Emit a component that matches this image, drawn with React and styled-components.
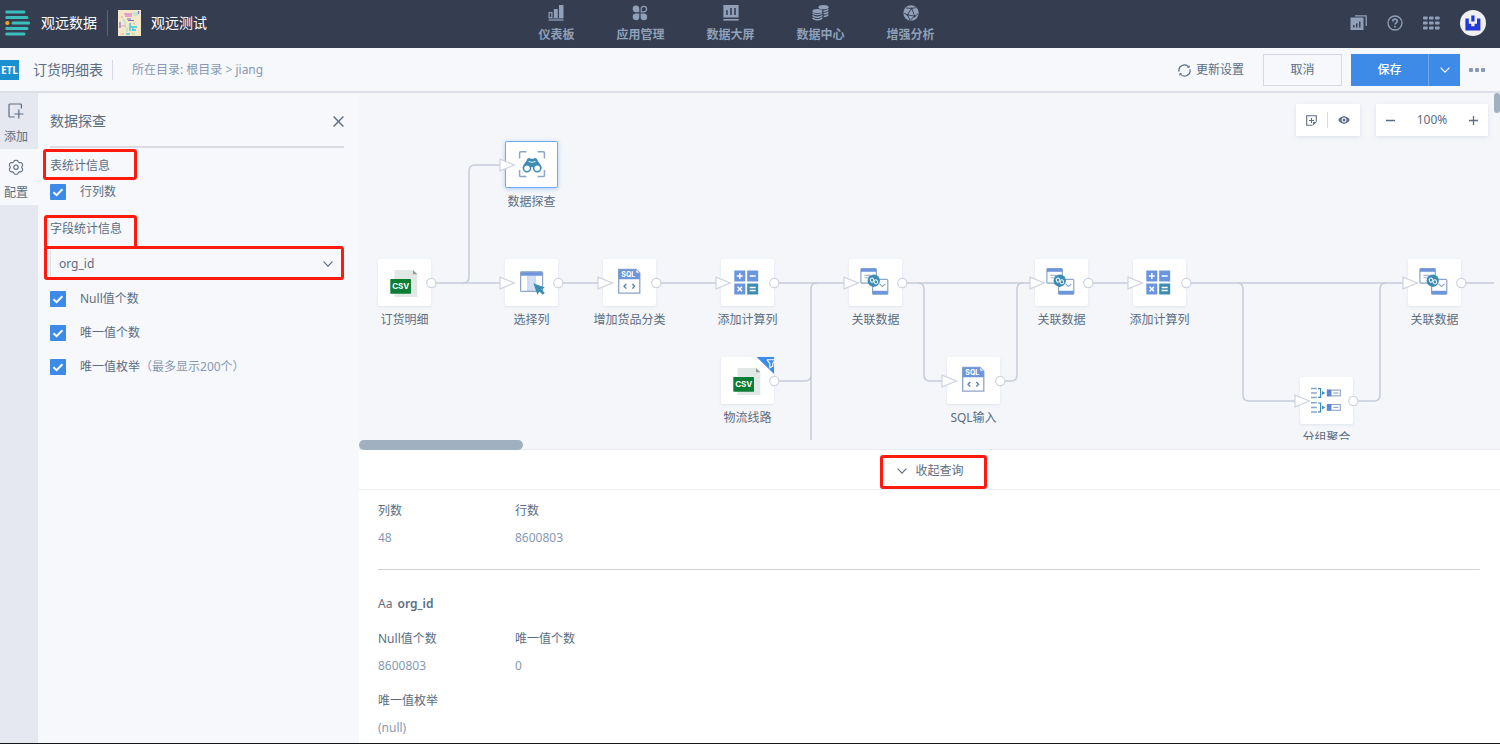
import React from "react"
import styled, { createGlobalStyle, css } from "styled-components"

const theme = {
  colors: {
    header: "#353d50",
    nav: "#8fa0b8",
    page: "#f6f8fb",
    canvas: "#f4f6fa",
    rail: "#e5e8f0",
    text: "#5c6d82",
    muted: "#8799b3",
    line: "#dcdfe6",
    wire: "#c5ccda",
    blue: "#3d8be6",
    iconBlue: "#6b96dd",
    iconTeal: "#3d8cb3",
    iconLine: "#8da4c8",
    scroll: "#a0b0c0",
    mark: "#ff1a0d",
  },
  fontSizes: [12, 14],
}

const GlobalStyle = createGlobalStyle`
  * {
    box-sizing: border-box;
  }

  body {
    margin: 0;
    color: ${theme.colors.text};
    font-family: "Noto Sans", "Noto Sans CJK SC", sans-serif;
    font-size: ${theme.fontSizes[0]}px;
    line-height: 20px;
  }

  button, select, input {
    margin: 0;
    padding: 0;
    border: 0;
    background: none;
    color: inherit;
    font: inherit;
  }

  a {
    color: inherit;
    text-decoration: none;
  }

  svg {
    display: block;
    flex: none;
  }
`

/* header icons */

const LogoIcon = () => (
  <svg width="26" height="28" viewBox="0 0 26 28" aria-hidden="true">
    <g stroke="#3bbdbb" strokeWidth="3" strokeLinecap="round">
      <path d="M1.7 3H19M1.7 8.4H22M8 14H23.7M1.7 19.6H22M1.7 25H19" />
    </g>
    <circle cx="2.3" cy="14" r="2.1" fill="#f7a81b" />
  </svg>
)

const TenantIcon = () => (
  <svg width="23" height="26" viewBox="0 0 23 26" aria-hidden="true">
    <path d="M0 0h23v26H0z" fill="#f4e8c8" />
    <g fill="none" strokeWidth="1">
      <path d="M14 3h6M15 5h5M5 9q3 3 2 7 3 2 2 6" stroke="#9bdcd6" />
      <path d="M6 4h8M7 6h7" strokeWidth="1.6" stroke="#d98fc8" />
      <path d="M9 9h4M10 10.5h6M2 12v6M20.5 1v3" strokeWidth="1.2" stroke="#7a6fd0" />
      <path d="M12 13v8M12 17h7M14 20h4M8 24h4M15 18v3" strokeWidth="1.4" stroke="#3cc4e0" />
      <path d="M3 7h2M3 16h4M4 24h2" stroke="#eba0a8" />
      <path d="M14 24h3M15 13l2 1" stroke="#b6d58c" />
    </g>
  </svg>
)

const DashboardIcon = () => (
  <svg width="16" height="16" viewBox="0 0 16 16" fill="currentColor" aria-hidden="true">
    <path d="M.5 13.4h15V16H.5z" opacity=".65" />
    <path d="M11 0h4.5v13H11zM5.8 4h4v9h-4z" />
    <path d="M1.1 7.6h2.8v4.9H1.1z" fill="none" stroke="currentColor" strokeWidth="1.2" />
  </svg>
)

const AppsIcon = () => (
  <svg width="16" height="16" viewBox="0 0 16 16" fill="currentColor" aria-hidden="true">
    <path d="M7.3 7.2H4A3.3 3.3 0 1 1 7.3 4zM7.3 8.6H4A3.3 3.3 0 1 0 7.3 12zM8.6 8.6H12A3.3 3.3 0 1 1 8.6 12z" />
    <path d="M9.2 6.8V4A2.7 2.7 0 1 1 12 6.8z" fill="none" stroke="currentColor" strokeWidth="1.2" />
  </svg>
)

const ScreenIcon = () => (
  <svg width="16" height="16" viewBox="0 0 16 16" fill="currentColor" aria-hidden="true">
    <path
      fillRule="evenodd"
      d="M.4 0h15.2v12.4H.4zM3.2 5v5h1.5V5zM7.2 3v7h1.6V3zM11.2 3v7h1.6V3z"
    />
    <path d="M.4 14h15.2v1.6H.4z" />
  </svg>
)

const DataIcon = () => (
  <svg width="17" height="16" viewBox="0 0 17 16" fill="currentColor" aria-hidden="true">
    <ellipse cx="11.5" cy="2.2" rx="5" ry="2.1" />
    <ellipse cx="5.4" cy="6" rx="5" ry="2.1" />
    <g fill="none" stroke="currentColor" strokeWidth="1.5">
      <path d="M.7 7.6c.8 2.6 8.6 2.6 9.4 0M.7 10.2c.8 2.6 8.6 2.6 9.4 0M.7 12.8c.8 2.6 8.6 2.6 9.4 0" />
      <path d="M11.4 6.2c2.2 0 4.2-.6 4.8-1.9M11.6 8.8c2 0 4-.6 4.6-1.9M11.6 11.4c2 0 4-.6 4.6-1.9" />
    </g>
  </svg>
)

const BoostIcon = () => (
  <svg width="16" height="16" viewBox="0 0 16 16" aria-hidden="true">
    <circle cx="8" cy="8" r="7.7" fill="currentColor" />
    <g fill="none" stroke={theme.colors.header} strokeWidth=".9">
      <path d="M8.6 3.4 4.4 9.8l7.4 1.4zM8.6 3.4 13 2.6M4.4 9.8.6 8M4.4 9.8l2.6 5.6M11.8 11.2l3.4-2.4M11.8 11.2 7 15.4M8.6 3.4 3.2 3" />
    </g>
    <g fill={theme.colors.header}>
      <circle cx="8.6" cy="3.4" r="1" />
      <circle cx="4.4" cy="9.8" r="1" />
      <circle cx="11.8" cy="11.2" r="1" />
    </g>
  </svg>
)

const ReportsIcon = () => (
  <svg width="17" height="16" viewBox="0 0 17 16" fill="currentColor" aria-hidden="true">
    <path
      fillRule="evenodd"
      d="M.5 2.6h13V15H.5zM3 10v2.4h1.5V10zM6 8.6v3.8h1.5V8.6zM9 6.6v5.8h1.5V6.6z"
    />
    <path d="M5 .8h11.2V11" fill="none" stroke="currentColor" strokeWidth="1.3" />
  </svg>
)

const HelpIcon = () => (
  <svg width="16" height="16" viewBox="0 0 16 16" fill="none" stroke="currentColor" aria-hidden="true">
    <circle cx="8" cy="8" r="7" strokeWidth="1.3" />
    <path d="M5.8 6.4C5.8 3.4 10.3 3.5 10.3 6.2 10.3 7.8 8 7.8 8 9.6" strokeWidth="1.6" />
    <path d="M8 10.8v1.6" strokeWidth="1.6" />
  </svg>
)

const GridIcon = () => (
  <svg width="17" height="14" viewBox="0 0 17 14" fill="currentColor" aria-hidden="true">
    {[0, 5, 10].map(y =>
      [0, 6, 12].map(x => (
        <rect key={`${x}-${y}`} x={x} y={y + 0.5} width="4.6" height="3" rx=".8" />
      ))
    )}
  </svg>
)

const AvatarIcon = () => (
  <svg width="26" height="26" viewBox="0 0 26 26" aria-hidden="true">
    <circle cx="13" cy="13" r="13" fill="#f0f0f2" />
    <path
      d="M5.4 8.6h3.4v5.2h2.4v2.4h3.4v-2.4H17V8.6h3.4v12H5.4zM11.3 5.6h3.2v6h-3.2z"
      fill="#2238d8"
    />
  </svg>
)

/* line icons */

const RefreshIcon = () => (
  <svg width="13" height="13" viewBox="0 0 13 13" fill="none" stroke="currentColor" strokeWidth="1.2" aria-hidden="true">
    <path d="M1.1 7.6A5.4 5.4 0 0 1 10.6 3M11.9 5.4A5.4 5.4 0 0 1 2.4 10" />
    <path d="M11.2 1.6v1.8H9.4M1.8 11.4V9.6h1.8" strokeWidth="1" />
  </svg>
)

const ChevronIcon = () => (
  <svg width="10" height="6" viewBox="0 0 10 6" fill="none" stroke="currentColor" strokeWidth="1.1" aria-hidden="true">
    <path d="M.6.6 5 5.2 9.4.6" />
  </svg>
)

const CloseIcon = () => (
  <svg width="11" height="11" viewBox="0 0 11 11" fill="none" stroke="currentColor" strokeWidth="1.4" aria-hidden="true">
    <path d="M.6.6l9.8 9.8M10.4.6.6 10.4" />
  </svg>
)

const AddIcon = () => (
  <svg width="16" height="16" viewBox="0 0 16 16" fill="none" stroke="currentColor" strokeWidth="1.2" aria-hidden="true">
    <path d="M13.4 5.4V2q0-1-1-1H2Q1 1 1 2v11q0 1 1 1h4.6M10.8 6.6v8.8M6.4 11H15.4" />
  </svg>
)

const GearIcon = () => (
  <svg width="16" height="16" viewBox="0 0 16 16" fill="none" stroke="currentColor" strokeWidth="1.1" aria-hidden="true">
    <path
      d="M6.4 1.6q1.6-.8 3.2 0l.8 1.5 1 .6 1.8-.1q1.3 1 1.5 2.6l-.9 1.6v.9l.9 1.6q-.2 1.6-1.5 2.6l-1.8-.1-1 .6-.8 1.5q-1.6.8-3.2 0l-.8-1.5-1-.6-1.8.1q-1.3-1-1.5-2.6l.9-1.6v-.9l-.9-1.6q.2-1.6 1.5-2.6l1.8.1 1-.6z"
      strokeLinejoin="round"
    />
    <circle cx="8" cy="8.2" r="2.2" />
  </svg>
)

const NoteIcon = () => (
  <svg width="11" height="11" viewBox="0 0 11 11" fill="none" stroke="currentColor" strokeWidth="1.1" aria-hidden="true">
    <path d="M10.3 6.8V.7H.7v9.6h6M5.5 3v5M3 5.5h5" />
    <path d="M7 10.6 10.6 7H7z" fill="currentColor" stroke="none" />
  </svg>
)

const EyeIcon = () => (
  <svg width="12" height="8" viewBox="0 0 12 8" aria-hidden="true">
    <path d="M.3 4C3-1 9-1 11.7 4 9 9 3 9 .3 4z" fill="currentColor" />
    <circle cx="6" cy="4" r="2.5" fill="#fff" />
    <circle cx="6" cy="4" r="1.5" fill="currentColor" />
  </svg>
)

const MinusIcon = () => (
  <svg width="9" height="9" viewBox="0 0 9 9" fill="none" stroke="currentColor" strokeWidth="1.5" aria-hidden="true">
    <path d="M0 4.5h9" />
  </svg>
)

const PlusIcon = () => (
  <svg width="9" height="9" viewBox="0 0 9 9" fill="none" stroke="currentColor" strokeWidth="1.3" aria-hidden="true">
    <path d="M0 4.5h9M4.5 0v9" />
  </svg>
)

const TickIcon = () => (
  <svg width="16" height="16" viewBox="0 0 16 16" fill="none" stroke="#fff" strokeWidth="2" aria-hidden="true">
    <path d="M3.4 8.2 6.6 11.2 12.4 5.2" />
  </svg>
)

/* node icons, all drawn on the 53x47 card */

const { iconBlue, iconTeal, iconLine } = theme.colors

const CsvIcon = () => (
  <g>
    <path d="M16.5 11H35l4.3 4.3V38H16.5z" fill="#e1e8e5" />
    <path d="M35 11l4.3 4.3H35z" fill="#909c9c" />
    <rect x="12.3" y="20" width="20.7" height="14.7" rx=".6" fill="#0b7d35" />
    <IconText x="22.7" y="30.4" size={8}>CSV</IconText>
  </g>
)

const SqlIcon = () => (
  <g>
    <path d="M15.7 10.4H33L36.8 14V34.2H15.7z" fill="#fff" stroke={iconLine} strokeWidth="1.3" />
    <path d="M15.7 10.4H33L36.8 14V20.3H15.7z" fill={iconBlue} />
    <path d="M33 10.4v3.6h3.8z" fill="#fff" stroke={iconLine} strokeWidth=".8" />
    <IconText x="25.3" y="18" size={7}>SQL</IconText>
    <path d="M23.3 25 21 27.3l2.3 2.3M29.3 25l2.3 2.3-2.3 2.3" fill="none" stroke="#5579ad" strokeWidth="1.3" />
  </g>
)

const SelectIcon = () => (
  <g>
    <rect x="15.6" y="12.8" width="22" height="19.6" rx="1" fill="#fff" />
    <path d="M22.8 16.5h7.4v16h-7.4z" fill="#d3e0f6" />
    <path d="M15.6 12.8h22v4h-22z" fill={iconBlue} />
    <path d="M22.8 17v15.4M30.2 17v15.4" stroke="#c3d0e6" strokeWidth="1" />
    <rect x="15.6" y="12.8" width="22" height="19.6" rx="1" fill="none" stroke={iconLine} strokeWidth="1.2" />
    <path d="M28.4 24.2 39.8 28.4 36.4 30.4 39.8 33.8 37.8 35.8 34.4 32.4 32.4 35.8z" fill={iconTeal} />
  </g>
)

const CalcIcon = () => (
  <g>
    <path d="M13.3 11.6h11v11h-11zM26.2 11.6h11v11h-11zM13.3 24.5h11v11h-11z" fill={iconBlue} />
    <path d="M26.2 24.5h11v11h-11z" fill={iconTeal} />
    <path
      d="M15.8 17.1h6M18.8 14.1v6M28.7 17.1h6M16.6 27.8l4.4 4.4M21 27.8l-4.4 4.4M28.7 28.4h6M28.7 31.6h6"
      stroke="#fff"
      strokeWidth="1.5"
    />
  </g>
)

const JoinIcon = () => (
  <g>
    <rect x="11.9" y="9.6" width="15.4" height="14.6" rx="1" fill="#fff" stroke={iconLine} strokeWidth="1.2" />
    <path d="M12 9.6h15.2v3.2H12z" fill={iconBlue} />
    <path d="M15.4 16.4h6M15.4 18.8h4" stroke="#a7b7cf" strokeWidth="1.1" />
    <rect x="23.6" y="20.4" width="15.2" height="14.8" rx="1" fill="#fff" stroke={iconLine} strokeWidth="1.2" />
    <path d="M23.7 31.8h15v3.4h-15z" fill={iconBlue} />
    <path d="M30.6 24.8l2.8 2.6 3-2.6" fill="none" stroke={iconLine} strokeWidth="1.1" />
    <circle cx="24.7" cy="21.7" r="6.2" fill={iconTeal} />
    <g fill="none" stroke="#fff" strokeWidth="1">
      <rect x="-2.6" y="-1.5" width="3.4" height="4" rx="1.7" transform="translate(23.6 20.2) rotate(-30)" />
      <rect x="-1" y="-1.5" width="3.4" height="4" rx="1.7" transform="translate(26 22.8) rotate(-30)" />
    </g>
  </g>
)

const GroupIcon = () => (
  <g>
    {[0, 14.4].map(y => (
      <g key={y} transform={`translate(0 ${y})`}>
        <path d="M11 11.4h5.8M11 16h5.8M11 20.6h5.8" stroke={iconLine} strokeWidth="1.5" />
        <path d="M18 11.6h2.6v8.8H18" fill="none" stroke={iconTeal} strokeWidth="1.2" />
        <path d="M22 14l3.2 2-3.2 2z" fill={iconTeal} />
        <rect x="27.3" y="13.1" width="13" height="5.8" fill="#fff" stroke={iconLine} strokeWidth="1.1" />
        <path d="M27 12.7h4.4v6.6H27z" fill="#5b86d6" />
        <path d="M33.4 16h5" stroke={iconLine} strokeWidth="1.1" />
      </g>
    ))}
  </g>
)

const ExploreIcon = () => (
  <g>
    <path
      d="M14.6 17.6V12q0-1.2 1.2-1.2h5.6M32.6 10.8h5.6q1.2 0 1.2 1.2v5.6M39.4 29v5.4q0 1.2-1.2 1.2h-5.6M21.4 35.6h-5.6q-1.2 0-1.2-1.2V29"
      fill="none"
      stroke={iconLine}
      strokeWidth="1.5"
    />
    <path
      d="M22.4 17.8q2-1.6 3.4 0h2.6q1.4-1.6 3.4 0l1 2.2 2.6 3.6q1.4 2 1 4.2h-8.2v-1.6h-2.2v1.6h-8.2q-.4-2.2 1-4.2l2.6-3.6z"
      fill={iconTeal}
    />
    <path d="M23.6 20.4q3.5 2 7 0" fill="none" stroke="#fff" strokeWidth=".9" />
    <circle cx="22" cy="27.2" r="3.5" fill="#fff" stroke={iconTeal} strokeWidth="1.5" />
    <circle cx="32.2" cy="27.2" r="3.5" fill="#fff" stroke={iconTeal} strokeWidth="1.5" />
  </g>
)

const FilterFlag = () => (
  <g>
    <path d="M35.6 0H53v17z" fill={theme.colors.blue} />
    <path d="M45.8 2.8H53M46 2.8l2.8 3.6v4.4l3-1.6V6.4L53 4.6" fill="none" stroke="#fff" strokeWidth="1.1" />
  </g>
)

const menu = [
  { title: "仪表板", Icon: DashboardIcon },
  { title: "应用管理", Icon: AppsIcon },
  { title: "数据大屏", Icon: ScreenIcon },
  { title: "数据中心", Icon: DataIcon },
  { title: "增强分析", Icon: BoostIcon },
]

const nodes = [
  { id: "orders", title: "订货明细", x: 19, y: 166, Icon: CsvIcon, source: true },
  { id: "explore", title: "数据探查", x: 146, y: 48, Icon: ExploreIcon, selected: true },
  { id: "columns", title: "选择列", x: 146, y: 166, Icon: SelectIcon },
  { id: "category", title: "增加货品分类", x: 244, y: 166, Icon: SqlIcon },
  { id: "calc", title: "添加计算列", x: 362, y: 166, Icon: CalcIcon },
  { id: "routes", title: "物流线路", x: 362, y: 264, Icon: CsvIcon, source: true, filtered: true },
  { id: "join", title: "关联数据", x: 490, y: 166, Icon: JoinIcon },
  { id: "sql", title: "SQL输入", x: 588, y: 264, Icon: SqlIcon },
  { id: "join2", title: "关联数据", x: 676, y: 166, Icon: JoinIcon },
  { id: "calc2", title: "添加计算列", x: 774, y: 166, Icon: CalcIcon },
  { id: "group", title: "分组聚合", x: 941, y: 284, Icon: GroupIcon },
  { id: "join3", title: "关联数据", x: 1049, y: 166, Icon: JoinIcon },
]

const wires = [
  "M72 190H146M199 190H244M297 190H362M415 190H490M543 190H676M729 190H774M827 190H1049M1102 190H1135",
  "M104 190q6 0 6-6V78q0-6 6-6H146",
  "M452 347V196q0-6 6-6M415 288H446q6 0 6-6",
  "M559 190q6 0 6 6V282q0 6 6 6H588",
  "M641 288H652q6 0 6-6V196q0-6 6-6",
  "M878 190q6 0 6 6V302q0 6 6 6H941",
  "M994 308H1015q6 0 6-6V196q0-6 6-6",
]

const fieldChecks = [
  { id: "nulls", title: "Null值个数" },
  { id: "distinct", title: "唯一值个数" },
  { id: "values", title: "唯一值枚举", hint: "（最多显示200个）" },
]

const IconText = ({ x, y, size, children }) => (
  <text
    x={x}
    y={y}
    fontSize={size}
    fontFamily="Inter, sans-serif"
    fontWeight="700"
    textAnchor="middle"
    fill="#fff"
  >
    {children}
  </text>
)

const CheckRow = ({ id, title, hint, compact }) => (
  <CheckLabel htmlFor={id} $compact={compact}>
    <CheckSlot>
      <Checkbox id={id} type="checkbox" defaultChecked />
      <TickIcon />
    </CheckSlot>
    <span>
      {title}
      {hint && <Hint>{hint}</Hint>}
    </span>
  </CheckLabel>
)

const FlowNode = ({ title, x, y, Icon, source, selected, filtered }) => (
  <NodeBox style={{ left: x, top: y }}>
    <NodeCard type="button" aria-label={title} $selected={selected}>
      <NodeDrawing viewBox="0 0 53 47" aria-hidden="true">
        <Icon />
        {filtered && <FilterFlag />}
        <g fill="#fff" stroke="#cdd3df" strokeWidth="1.2">
          {!source && <path d="M-5 18.2V29.8L9.4 24z" />}
          {!selected && <circle cx="53.3" cy="24" r="4.6" />}
        </g>
      </NodeDrawing>
    </NodeCard>
    <NodeTitle>{title}</NodeTitle>
  </NodeBox>
)

const Stat = ({ title, value }) => (
  <StatItem>
    <dt>{title}</dt>
    <StatValue>{value}</StatValue>
  </StatItem>
)

const App = () => (
  <Page>
    <GlobalStyle />
    <Header>
      <Brand>
        <LogoIcon />
        <BrandName>观远数据</BrandName>
        <BrandDivider />
        <TenantIcon />
        <BrandName>观远测试</BrandName>
      </Brand>
      <Menu>
        {menu.map(({ title, Icon }) => (
          <MenuLink key={title} href="#">
            <Icon />
            {title}
          </MenuLink>
        ))}
      </Menu>
      <Tools>
        <IconButton type="button" aria-label="报表"><ReportsIcon /></IconButton>
        <IconButton type="button" aria-label="帮助"><HelpIcon /></IconButton>
        <IconButton type="button" aria-label="应用"><GridIcon /></IconButton>
        <IconButton type="button" aria-label="账户"><AvatarIcon /></IconButton>
      </Tools>
    </Header>

    <TitleBar>
      <EtlBadge>ETL</EtlBadge>
      <Title>订货明细表</Title>
      <Path>所在目录: 根目录 &gt; jiang</Path>
      <RefreshButton type="button">
        <RefreshIcon />
        更新设置
      </RefreshButton>
      <CancelButton type="button">取消</CancelButton>
      <SaveGroup>
        <SaveButton type="button">保存</SaveButton>
        <SaveMenuButton type="button" aria-label="更多保存选项"><ChevronIcon /></SaveMenuButton>
      </SaveGroup>
      <MoreButton type="button" aria-label="更多">
        <i /><i /><i />
      </MoreButton>
    </TitleBar>

    <Body>
      <Rail>
        <RailButton type="button">
          <AddIcon />
          添加
        </RailButton>
        <RailButton type="button" $active>
          <GearIcon />
          配置
        </RailButton>
      </Rail>

      <Settings>
        <SettingsHeader>
          <SettingsTitle>数据探查</SettingsTitle>
          <IconButton type="button" aria-label="关闭"><CloseIcon /></IconButton>
        </SettingsHeader>
        <SectionTitle>
          表统计信息
          <Mark $inset="-7px auto -4px -7px" $width={94} />
        </SectionTitle>
        <CheckRow id="shape" title="行列数" compact />
        <FieldTitle>
          <label htmlFor="field">字段统计信息</label>
          <Mark $inset="-4px auto -10px -6px" $width={93} />
        </FieldTitle>
        <SelectBox>
          <Select id="field" defaultValue="org_id">
            <option>org_id</option>
          </Select>
          <ChevronIcon />
          <Mark $inset="-3px 0 -1px -7px" />
        </SelectBox>
        {fieldChecks.map(check => (
          <CheckRow key={check.id} {...check} />
        ))}
      </Settings>

      <Main>
        <CanvasArea>
          <Canvas>
            <Wires viewBox="0 0 1135 347" aria-hidden="true">
              {wires.map(d => (
                <path key={d} d={d} />
              ))}
            </Wires>
            {nodes.map(node => (
              <FlowNode key={node.id} {...node} />
            ))}
          </Canvas>
          <CanvasTools>
            <ToolBox>
              <IconButton type="button" aria-label="添加备注"><NoteIcon /></IconButton>
              <ToolDivider />
              <IconButton type="button" aria-label="预览"><EyeIcon /></IconButton>
            </ToolBox>
            <ZoomBox>
              <IconButton type="button" aria-label="缩小"><MinusIcon /></IconButton>
              100%
              <IconButton type="button" aria-label="放大"><PlusIcon /></IconButton>
            </ZoomBox>
          </CanvasTools>
          <ScrollX />
          <ScrollY />
        </CanvasArea>

        <ResultHeader>
          <CollapseButton type="button">
            <ChevronIcon />
            收起查询
            <Mark $inset="-6px -23px -8px -17px" />
          </CollapseButton>
        </ResultHeader>
        <Result>
          <TableStats>
            <Stat title="列数" value="48" />
            <Stat title="行数" value="8600803" />
          </TableStats>
          <FieldName>
            <span>Aa</span> org_id
          </FieldName>
          <Stats>
            <Stat title="Null值个数" value="8600803" />
            <Stat title="唯一值个数" value="0" />
          </Stats>
          <Stats>
            <Stat title="唯一值枚举" value="(null)" />
          </Stats>
        </Result>
      </Main>
    </Body>
  </Page>
)

export default App

const Page = styled.div`
  display: flex;
  flex-direction: column;
  min-height: 100vh;
  border-bottom: 1px solid #15161a;
  background-color: ${theme.colors.page};
`

const Header = styled.header`
  display: flex;
  align-items: center;
  height: 48px;
  padding: 0 14px 2px 5px;
  background-color: ${theme.colors.header};
  color: ${theme.colors.nav};
`

const Brand = styled.div`
  display: flex;
  flex: 1;
  align-items: center;
`

const BrandName = styled.span`
  margin-left: 10px;
  color: #fff;
  font-size: ${theme.fontSizes[1]}px;
`

const BrandDivider = styled.span`
  width: 1px;
  height: 26px;
  margin: 0 10px;
  background-color: #5a6274;
`

const Menu = styled.nav`
  display: flex;
  gap: 42px;
  margin-right: 18px;
  padding-top: 4px;
`

const MenuLink = styled.a`
  display: flex;
  flex-direction: column;
  align-items: center;
  gap: 4px;
  font-weight: 600;
`

const Tools = styled.div`
  display: flex;
  flex: 1;
  align-items: center;
  justify-content: flex-end;
  gap: 20px;
`

const IconButton = styled.button`
  cursor: pointer;
`

const TitleBar = styled.div`
  display: flex;
  align-items: center;
  height: 45px;
  padding: 1px 15px 0 0;
  border-bottom: 2px solid ${theme.colors.line};
`

const EtlBadge = styled.span`
  width: 19px;
  height: 20px;
  background-color: #1b90d0;
  color: #fff;
  font-family: "Liberation Sans Narrow", "Open Sans", sans-serif;
  font-size: 10px;
  font-weight: 700;
  text-align: center;
`

const Title = styled.h1`
  margin: 0 19px 0 14px;
  padding-right: 9px;
  border-right: 1px solid #d3d8e1;
  font-size: ${theme.fontSizes[1]}px;
  font-weight: 400;
`

const Path = styled.span`
  flex: 1;
  color: ${theme.colors.muted};
`

const RefreshButton = styled.button`
  display: flex;
  align-items: center;
  gap: 5px;
  margin-right: 19px;
`

const buttonFrame = css`
  height: 32px;
  border: 1px solid #d3d8e2;
`

const CancelButton = styled.button`
  ${buttonFrame}
  width: 79px;
  margin-right: 9px;
`

const SaveGroup = styled.div`
  display: flex;
  margin-right: 9px;
  background-color: ${theme.colors.blue};
  color: #fff;
`

const SaveButton = styled.button`
  width: 77px;
  height: 32px;
  font-weight: 500;
`

const SaveMenuButton = styled.button`
  display: flex;
  align-items: center;
  justify-content: center;
  width: 32px;
  border-left: 1px solid #6aa7ee;
`

const MoreButton = styled.button`
  display: flex;
  gap: 2px;

  i {
    width: 4px;
    height: 4px;
    border-radius: 1px;
    background-color: ${theme.colors.muted};
  }
`

const Body = styled.div`
  display: flex;
  flex: 1;
`

const Rail = styled.div`
  width: 38px;
  background-color: ${theme.colors.rail};
`

const RailButton = styled.button`
  display: flex;
  flex-direction: column;
  align-items: center;
  gap: 8px;
  width: 100%;
  padding: 10px 6px 2px 0;
  background-color: ${({ $active }) => ($active ? theme.colors.page : "transparent")};
`

const Settings = styled.aside`
  width: 321px;
  padding: 0 15px 0 12px;
`

const SettingsHeader = styled.div`
  display: flex;
  align-items: center;
  justify-content: space-between;
  height: 55px;
  padding-top: 3px;
  border-bottom: 2px solid #d9dce3;
`

const SettingsTitle = styled.h2`
  margin: 0;
  font-size: ${theme.fontSizes[1]}px;
  font-weight: 400;
`

const SectionTitle = styled.div`
  position: relative;
  margin: 8px 0 6px;
`

const FieldTitle = styled(SectionTitle)`
  margin: 17px 0 10px;
`

const Mark = styled.span`
  position: absolute;
  inset: ${({ $inset }) => $inset};
  width: ${({ $width }) => ($width ? `${$width}px` : "auto")};
  border: 3px solid ${theme.colors.mark};
  border-radius: 3px;
  pointer-events: none;
`

const CheckLabel = styled.label`
  display: flex;
  align-items: center;
  gap: 14px;
  height: ${({ $compact }) => ($compact ? 20 : 34)}px;
`

const CheckSlot = styled.span`
  display: grid;

  > * {
    grid-area: 1 / 1;
  }

  svg {
    pointer-events: none;
  }
`

const Checkbox = styled.input`
  width: 16px;
  height: 16px;
  border-radius: 1px;
  background-color: ${theme.colors.blue};
  appearance: none;
`

const Hint = styled.span`
  color: ${theme.colors.muted};
`

const SelectBox = styled.div`
  position: relative;
  display: flex;
  align-items: center;
  margin-bottom: 3px;
  border-left: 1px solid ${theme.colors.line};

  svg {
    margin: 0 11px 0 -21px;
    pointer-events: none;
  }
`

const Select = styled.select`
  flex: 1;
  height: 30px;
  padding-left: 8px;
  appearance: none;
`

const Main = styled.main`
  display: flex;
  flex: 1;
  flex-direction: column;
  min-width: 0;
`

const CanvasArea = styled.section`
  position: relative;
  display: flex;
  flex: 1;
  flex-direction: column;
  min-height: 300px;
  padding: 0 6px 9px 0;
  border-bottom: 1px solid #e7eaf1;
  background-color: ${theme.colors.canvas};
`

const Canvas = styled.div`
  position: relative;
  flex: 1;
  overflow: hidden;
`

const Wires = styled.svg`
  position: absolute;
  width: 1135px;
  height: 347px;
  fill: none;
  stroke: ${theme.colors.wire};
  stroke-width: 1.5;
`

const NodeBox = styled.div`
  position: absolute;
  display: flex;
  flex-direction: column;
  align-items: center;
  gap: 4px;
  width: 53px;
`

const NodeCard = styled.button`
  width: 53px;
  height: 47px;
  border-radius: 2px;
  background-color: #fff;
  box-shadow: ${({ $selected }) =>
    $selected
      ? "inset 0 0 0 1px #6eabf5, 0 1px 4px rgba(61, 139, 230, 0.4)"
      : "0 1px 3px rgba(150, 165, 190, 0.22)"};
`

const NodeDrawing = styled.svg`
  width: 53px;
  height: 47px;
  overflow: visible;
`

const NodeTitle = styled.span`
  white-space: nowrap;
`

const CanvasTools = styled.div`
  position: absolute;
  top: 11px;
  right: 12px;
  display: flex;
  gap: 16px;
`

const ToolBox = styled.div`
  display: flex;
  align-items: center;
  justify-content: space-between;
  width: 64px;
  height: 32px;
  padding: 0 10px;
  background-color: #fff;
  box-shadow: 0 1px 4px rgba(150, 165, 190, 0.25);
`

const ZoomBox = styled(ToolBox)`
  width: 112px;
`

const ToolDivider = styled.span`
  width: 1px;
  height: 16px;
  background-color: #d6dbe4;
`

const ScrollX = styled.div`
  position: absolute;
  bottom: -1px;
  left: 0;
  width: 164px;
  height: 10px;
  border-radius: 5px;
  background-color: ${theme.colors.scroll};
`

const ScrollY = styled.div`
  position: absolute;
  top: 0;
  right: 0;
  width: 6px;
  height: 20px;
  border-radius: 3px;
  background-color: ${theme.colors.scroll};
`

const ResultHeader = styled.div`
  display: flex;
  justify-content: center;
  height: 40px;
  padding: 11px 0 0 2px;
  border-bottom: 1px solid #eceef4;
  background-color: #fff;
`

const CollapseButton = styled.button`
  position: relative;
  display: flex;
  align-items: center;
  gap: 8px;
  height: 20px;
`

const Result = styled.section`
  padding: 7px 20px 2px 19px;
  background-color: #fff;
  line-height: 27px;
`

const Stats = styled.dl`
  display: flex;
  margin: 8px 0 0;
`

const TableStats = styled(Stats)`
  margin: 0;
  padding-bottom: 18px;
  border-bottom: 1px solid #cfd3db;
`

const StatItem = styled.div`
  width: 137px;
`

const StatValue = styled.dd`
  margin: 0;
  color: ${theme.colors.muted};
`

const FieldName = styled.h3`
  margin: 20px 0 0;
  font-size: ${theme.fontSizes[0]}px;
  font-weight: 600;

  span {
    margin-right: 2px;
    font-weight: 400;
  }
`
